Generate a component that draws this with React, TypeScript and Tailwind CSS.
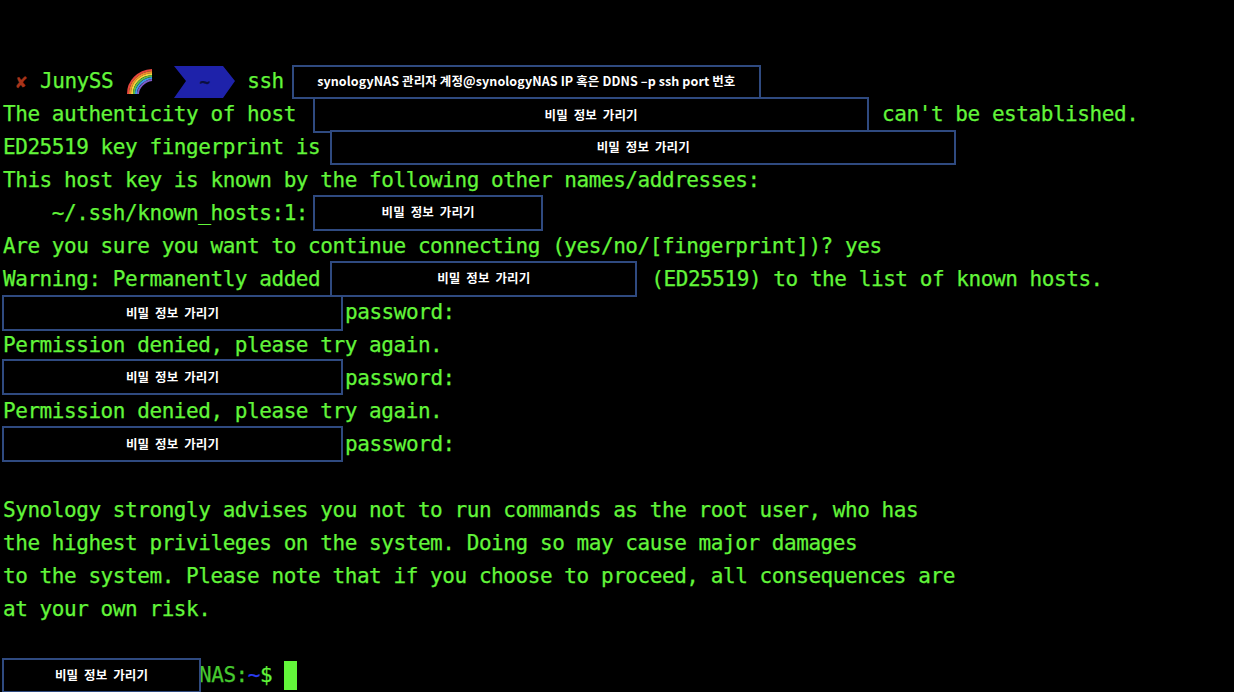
const MONO = "font-['DejaVu_Sans_Mono','Liberation_Mono',monospace]";

function Mask({ className, label = "비밀 정보 가리기" }: { className: string; label?: string }) {
  return (
    <span
      className={`relative z-10 flex shrink-0 items-center justify-center border-2 border-[#2f4a80] bg-black font-['Noto_Sans_CJK_KR','Noto_Sans',sans-serif] text-[12.5px] leading-none font-semibold tracking-[0.1px] text-white [-webkit-text-stroke:0px] ${label === "비밀 정보 가리기" ? "[word-spacing:3px]" : ""} ${className}`}
    >
      {label}
    </span>
  );
}

function Line({ children }: { children?: React.ReactNode }) {
  return <div className="flex h-[33px] items-center pl-[3px] whitespace-pre">{children}</div>;
}

function Rainbow() {
  return (
    <svg width="28" height="27" viewBox="0 0 28 27" className="shrink-0">
      <g fill="none" strokeWidth="2">
        <path d="M3 26C3 13 13 3 27 2" stroke="#e8483f" />
        <path d="M5 26C5 14 14 5 27 4" stroke="#f28a2e" />
        <path d="M7 26C7 15 15 7 27 6" stroke="#f6d33c" />
        <path d="M9 26C9 17 16 9 27 8" stroke="#5cc04a" />
        <path d="M11 26C11 18 18 11 27 10" stroke="#3f9be8" />
        <path d="M13 26C13 20 19 13 27 12" stroke="#7d5cc8" />
      </g>
    </svg>
  );
}

function PathSegment() {
  return (
    <span className="relative ml-[21px] flex h-[32px] w-[61px] shrink-0 items-center justify-center">
      <svg width="61" height="32" viewBox="0 0 61 32" className="absolute inset-0">
        <path d="M0 0H49L61 15L49 32H0L12 15Z" fill="#1e22aa" />
      </svg>
      <span className="relative text-[18px] font-bold text-[#0b0f40]">~</span>
    </span>
  );
}

export default function App() {
  return (
    <div className={`h-[692px] w-[1234px] overflow-hidden bg-black pt-[65px] text-[21px] leading-none tracking-[-0.44px] text-[#62f53a] [-webkit-text-stroke:0.25px] ${MONO}`}>
      <Line>
        <span className="ml-[13px] w-[24px] text-[18px] text-[#a8341a]">✘</span>
        <span>JunySS</span>
        <span className="ml-[12px]"><Rainbow /></span>
        <PathSegment />
        <span className="ml-[12px]">ssh</span>
        <Mask className="ml-[8px] h-[34px] w-[469px]" label="synologyNAS 관리자 계정@synologyNAS IP 혹은 DDNS –p ssh port 번호" />
      </Line>
      <Line>
        <span>The authenticity of host </span>
        <Mask className="ml-[5px] mt-[1px] h-[36px] w-[556px]" />
        <span className="ml-[13px]">can't be established.</span>
      </Line>
      <Line>
        <span>ED25519 key fingerprint is</span>
        <Mask className="ml-[10px] h-[35px] w-[626px]" />
      </Line>
      <Line>This host key is known by the following other names/addresses:</Line>
      <Line>
        <span>    ~/.ssh/known_hosts:1:</span>
        <Mask className="ml-[5px] mt-[-2px] h-[36px] w-[230px]" />
      </Line>
      <Line>Are you sure you want to continue connecting (yes/no/[fingerprint])? yes</Line>
      <Line>
        <span>Warning: Permanently added</span>
        <Mask className="ml-[10px] mt-[-2px] h-[36px] w-[307px]" />
        <span className="ml-[14px]">(ED25519) to the list of known hosts.</span>
      </Line>
      <Line>
        <Mask className="-ml-[1px] mt-[1px] h-[36px] w-[341px]" />
        <span className="ml-[2px]">password:</span>
      </Line>
      <Line>Permission denied, please try again.</Line>
      <Line>
        <Mask className="-ml-[1px] mt-[-3px] h-[36px] w-[341px]" />
        <span className="ml-[2px]">password:</span>
      </Line>
      <Line>Permission denied, please try again.</Line>
      <Line>
        <Mask className="-ml-[1px] mt-[-1px] h-[36px] w-[341px]" />
        <span className="ml-[2px]">password:</span>
      </Line>
      <Line />
      <Line>Synology strongly advises you not to run commands as the root user, who has</Line>
      <Line>the highest privileges on the system. Doing so may cause major damages</Line>
      <Line>to the system. Please note that if you choose to proceed, all consequences are</Line>
      <Line>at your own risk.</Line>
      <Line />
      <Line>
        <Mask className="-ml-[1px] h-[35px] w-[199px]" />
        <span className="-ml-[2px] text-[#46c92f]">NAS:</span>
        <span className="text-[#2a3bf0]">~</span>
        <span>$</span>
        <span className="ml-[12px] h-[29px] w-[13px] bg-[#62f53a]" />
      </Line>
    </div>
  );
}
